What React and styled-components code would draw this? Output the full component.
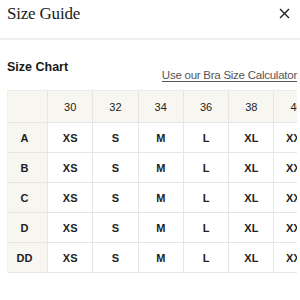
import React from "react";
import styled, { createGlobalStyle } from "styled-components";

const GlobalStyle = createGlobalStyle`
  body {
    margin: 0;
    background: #fff;
    font-family: "Liberation Sans", Arial, sans-serif;
    color: #1d1d1d;
  }
`;

const Page = styled.div`
  width: 300px;
  height: 300px;
  overflow: hidden;
  background: #fff;
`;

const Header = styled.header`
  height: 40px;
  box-sizing: border-box;
  padding: 4px 10px 0 7px;
  display: flex;
  justify-content: space-between;
  align-items: flex-start;
  border-bottom: 2px solid #efefef;
`;

const Title = styled.h2`
  margin: 0;
  font-family: "Liberation Serif", "Times New Roman", serif;
  font-weight: 400;
  font-size: 17px;
  line-height: 20px;
  letter-spacing: -0.2px;
  color: #1a1a1a;
`;

const Close = styled.button`
  border: none;
  background: none;
  padding: 0;
  margin-top: 4px;
  width: 11px;
  height: 11px;
  display: flex;
  cursor: pointer;
`;

const Body = styled.section`
  padding: 0 3px 0 7px;
`;

const ChartHead = styled.div`
  margin-top: 20px;
  display: flex;
  justify-content: space-between;
  align-items: flex-start;
`;

const ChartTitle = styled.h3`
  margin: 0;
  font-size: 12.5px;
  line-height: 15px;
  font-weight: 700;
  color: #1a1a1a;
`;

const CalcLink = styled.a`
  margin-top: 8px;
  font-size: 11.5px;
  line-height: 14px;
  letter-spacing: -0.25px;
  color: #555;
  text-decoration: underline;
  text-underline-offset: 2px;
  cursor: pointer;
`;

const TableWrap = styled.div`
  margin-top: 8px;
  overflow: hidden;
`;

const Grid = styled.div`
  display: grid;
  grid-template-columns: 40px repeat(7, 45.3px);
  width: max-content;
  border-top: 1px solid #ececec;
  border-left: 1px solid #f1f1f1;
`;

const Cell = styled.div`
  box-sizing: border-box;
  height: ${(p) => (p.$head ? "32px" : "30px")};
  display: flex;
  align-items: center;
  justify-content: center;
  padding-right: ${(p) => (p.$label ? "6px" : "0")};
  border-right: 1px solid #e6e6e6;
  border-bottom: 1px solid #e6e6e6;
  background: ${(p) => (p.$head || p.$label ? "#f8f6f1" : "#fff")};
  font-size: 11px;
  font-weight: ${(p) => (p.$head ? 400 : 700)};
  color: #222;
  white-space: nowrap;
`;

const bands = ["30", "32", "34", "36", "38", "40", "42"];
const sizes = ["XS", "S", "M", "L", "XL", "XXL", "XXL"];
const cups = ["A", "B", "C", "D", "DD"];

export default function App() {
  return (
    <Page>
      <GlobalStyle />
      <Header>
        <Title>Size Guide</Title>
        <Close aria-label="Close">
          <svg width="11" height="11" viewBox="0 0 11 11">
            <path d="M1 1L10 10M10 1L1 10" stroke="#222" strokeWidth="1.4" fill="none" />
          </svg>
        </Close>
      </Header>
      <Body>
        <ChartHead>
          <ChartTitle>Size Chart</ChartTitle>
          <CalcLink>Use our Bra Size Calculator</CalcLink>
        </ChartHead>
        <TableWrap>
          <Grid>
            <Cell $head $label />
            {bands.map((b) => (
              <Cell $head key={b}>{b}</Cell>
            ))}
            {cups.map((c) => (
              <React.Fragment key={c}>
                <Cell $label>{c}</Cell>
                {sizes.map((s, i) => (
                  <Cell key={i}>{s}</Cell>
                ))}
              </React.Fragment>
            ))}
          </Grid>
        </TableWrap>
      </Body>
    </Page>
  );
}
